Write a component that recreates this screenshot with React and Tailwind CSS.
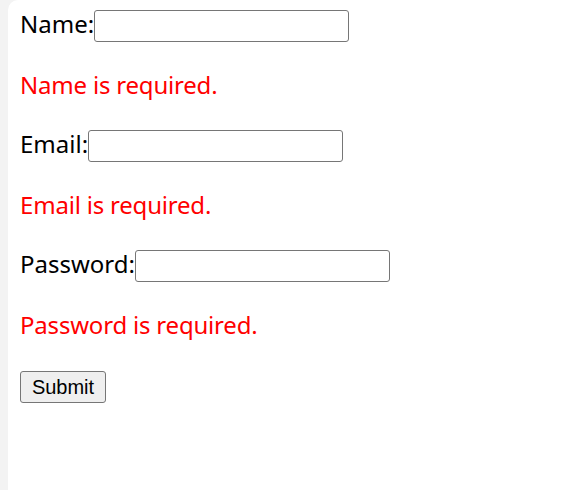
export default function App() {
  const fields = [
    { label: "Name", error: "Name is required.", type: "text" },
    { label: "Email", error: "Email is required.", type: "email" },
    { label: "Password", error: "Password is required.", type: "password" },
  ];

  return (
    <div className="flex h-[490px] w-[574px] bg-[#f3f3f3]">
      <div className="ml-[8px] flex-1 rounded-tl-[10px] bg-white pl-[12px] pt-[10px] font-['Noto_Sans',sans-serif]">
        {fields.map((f) => (
          <div key={f.label} className="mb-[28px]">
            <div className="flex h-[32px] items-start text-[24px] leading-[27px] text-black">
              <label>{f.label}:</label>
              <input
                type={f.type}
                className="h-[32px] w-[255px] rounded-[3px] border border-[#767676] bg-white"
              />
            </div>
            <p className="mt-[26px] h-[34px] text-[24px] leading-[34px] tracking-[-0.2px] text-[#ff0000]">
              {f.error}
            </p>
          </div>
        ))}
        <button
          type="submit"
          className="mt-[1px] h-[32px] w-[86px] rounded-[3px] border border-[#767676] bg-[#efefef] font-['Liberation_Sans',sans-serif] text-[20px] text-black"
        >
          Submit
        </button>
      </div>
    </div>
  );
}
